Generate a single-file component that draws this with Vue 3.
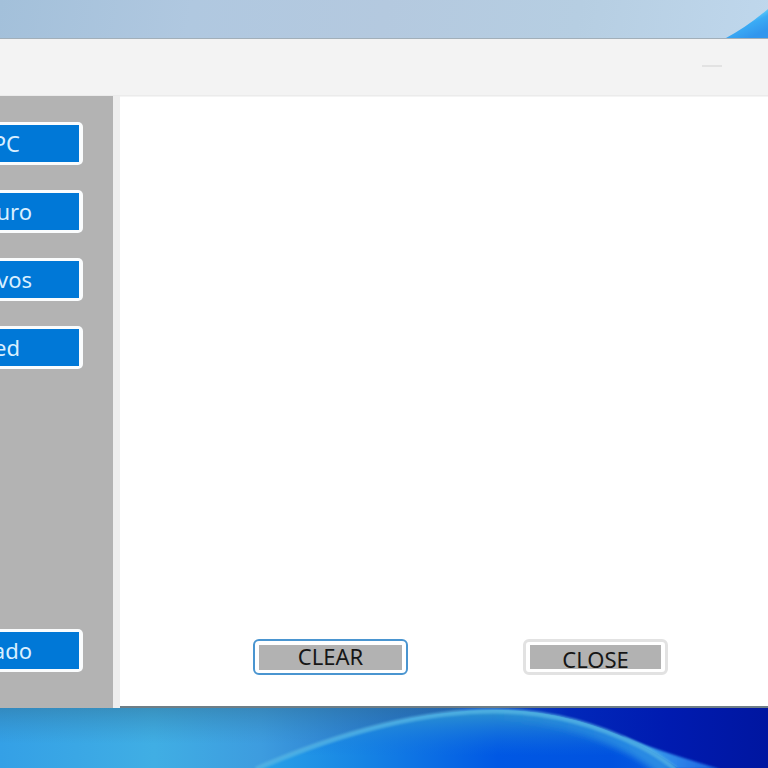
<script setup>
const actions = [
  { label: 'PC', size: 'short' },
  { label: 'uro', size: 'long' },
  { label: 'vos', size: 'long' },
  { label: 'ed', size: 'short' },
]
</script>

<template>
  <div class="desktop">
    <div class="sky" aria-hidden="true">
      <svg class="petal" viewBox="0 0 38 38">
        <defs>
          <linearGradient id="petal" x1="0.3" y1="0.3" x2="0.7" y2="0.9">
            <stop offset="0.1" stop-color="#6ad4fa" />
            <stop offset="0.45" stop-color="#3aabf5" />
            <stop offset="1" stop-color="#3196ed" />
          </linearGradient>
        </defs>
        <path d="M-4 38 Q17 27 38 9 V38 Z" fill="url(#petal)" />
      </svg>
    </div>

    <main class="window">
      <header class="titlebar">
        <button class="minimize" type="button" aria-label="Minimize"><span></span></button>
      </header>
      <div class="body">
        <nav class="sidebar">
          <button v-for="a in actions" :key="a.label" class="action" type="button">
            <span class="label" :class="a.size">{{ a.label }}</span>
          </button>
          <button class="action last" type="button"><span class="label long">ado</span></button>
        </nav>
        <section class="content">
          <div class="footer">
            <button class="command clear" type="button"><span>CLEAR</span></button>
            <button class="command close" type="button"><span>CLOSE</span></button>
          </div>
        </section>
      </div>
    </main>

    <svg class="bloom" viewBox="0 0 768 60" preserveAspectRatio="none" aria-hidden="true">
      <defs>
        <linearGradient id="base" x1="0" x2="1" y1="0" y2="0">
          <stop offset="0" stop-color="#34a0e6" />
          <stop offset="0.2" stop-color="#40aee4" />
          <stop offset="0.34" stop-color="#3d9cdf" />
          <stop offset="0.5" stop-color="#2676cc" />
          <stop offset="0.63" stop-color="#1556c4" />
          <stop offset="0.74" stop-color="#0128ba" />
          <stop offset="0.87" stop-color="#001bb0" />
          <stop offset="1" stop-color="#0016a0" />
        </linearGradient>
        <linearGradient id="shade" x1="0" x2="0" y1="0" y2="1">
          <stop offset="0" stop-color="#306e90" stop-opacity="0.45" />
          <stop offset="0.6" stop-color="#3080b0" stop-opacity="0" />
        </linearGradient>
        <linearGradient id="inner" x1="0" x2="1" y1="0" y2="0">
          <stop offset="0" stop-color="#2ba4e8" />
          <stop offset="0.25" stop-color="#1684e4" />
          <stop offset="0.55" stop-color="#0058e4" />
          <stop offset="0.8" stop-color="#0052df" />
          <stop offset="1" stop-color="#0a60e2" />
        </linearGradient>
        <linearGradient id="glow" x1="0" x2="0" y1="0" y2="1">
          <stop offset="0" stop-color="#359dcc" stop-opacity="0.95" />
          <stop offset="0.8" stop-color="#1672df" stop-opacity="0" />
        </linearGradient>
        <linearGradient id="rim" gradientUnits="userSpaceOnUse" x1="495" x2="640" y1="0" y2="0">
          <stop offset="0" stop-color="#36a0d8" stop-opacity="0" />
          <stop offset="1" stop-color="#2c90e4" stop-opacity="0.9" />
        </linearGradient>
        <linearGradient id="beam" x1="0" x2="1" y1="0" y2="0">
          <stop offset="0" stop-color="#4ab4ec" />
          <stop offset="0.5" stop-color="#2f8aea" />
          <stop offset="1" stop-color="#1a5fe0" />
        </linearGradient>
        <clipPath id="dome">
          <path d="M258 60 Q390 2 495 2 C550 2 598 16 640 37 Q660 47 678 60 Z" />
        </clipPath>
        <filter id="soft" x="-5%" y="-50%" width="110%" height="200%">
          <feGaussianBlur stdDeviation="1" />
        </filter>
        <filter id="haze" x="-5%" y="-50%" width="110%" height="200%">
          <feGaussianBlur stdDeviation="3" />
        </filter>
      </defs>
      <rect width="768" height="60" fill="url(#base)" />
      <rect width="460" height="60" fill="url(#shade)" />
      <path d="M622 28 Q655 42 720 61 L660 61 Z" fill="url(#beam)" filter="url(#soft)" />
      <g clip-path="url(#dome)">
        <rect x="250" width="450" height="60" fill="url(#inner)" />
        <rect x="250" width="450" height="60" fill="url(#glow)" />
        <path d="M495 5 C550 5 598 21 636 41 Q652 50 668 64" fill="none" stroke="url(#rim)" stroke-width="16" filter="url(#haze)" />
      </g>
      <path d="M256 61 Q390 3 495 3 C550 3 598 17 640 38 Q660 48 676 62" fill="none" stroke="#57b6e4" stroke-width="5" opacity="0.75" filter="url(#soft)" />
    </svg>
  </div>
</template>

<style>
body {
  margin: 0;
}
</style>

<style scoped>
.desktop {
  display: flex;
  flex-direction: column;
  min-height: 100vh;
  overflow: hidden;
  background: #b4c8de;
  font-family: "Noto Sans", "Open Sans", sans-serif;
}

button {
  box-sizing: border-box;
  margin: 0;
  padding: 0;
  border: 0;
  font: inherit;
  font-size: 22px;
  line-height: 28px;
}

.sky {
  display: flex;
  justify-content: flex-end;
  height: 38px;
  background: linear-gradient(100deg, #a3c0da 0%, #b0c8e0 25%, #b4c9df 50%, #b6cee2 75%, #bfd7ec 100%);
}

.petal {
  display: block;
  overflow: visible;
  width: 38px;
  height: 38px;
}

.window {
  display: flex;
  flex: 1;
  flex-direction: column;
  border-top: 1px solid #a2afb9;
  background: #f2f2f2;
}

.titlebar {
  display: flex;
  align-items: center;
  justify-content: flex-end;
  box-sizing: border-box;
  height: 57px;
  padding: 0 46px 2px 0;
  border-bottom: 1px solid #ebebeb;
  background: #f3f3f3;
}

.minimize {
  display: flex;
  align-items: center;
  height: 30px;
  background: transparent;
}

.minimize span {
  width: 20px;
  height: 2px;
  background: #e2e2e2;
}

.body {
  display: flex;
  flex: 1;
}

.sidebar {
  display: flex;
  flex-direction: column;
  gap: 25px;
  box-sizing: border-box;
  width: 120px;
  padding: 26px 30px 36px 0;
  border-right: 7px solid #eeeeee;
  background: #b3b3b3;
}

.action {
  display: flex;
  width: 83px;
  height: 43px;
  padding: 3px 4px 3px 0;
  border-radius: 0 5px 5px 0;
  background: #fafcfd;
  color: #d9efff;
}

.action::after {
  flex: 1;
  align-self: stretch;
  background: #0078d7;
  content: "";
}

.action.last {
  margin-top: auto;
}

.label {
  display: flex;
  align-items: center;
  align-self: stretch;
  justify-content: flex-end;
  padding-bottom: 2px;
  background: #0078d7;
}

.short {
  width: 20px;
}

.long {
  width: 32px;
}

.content {
  display: flex;
  flex: 1;
  flex-direction: column;
  justify-content: flex-end;
  border-top: 1px solid #f4f4f4;
  border-bottom: 2px solid #6f7e86;
  background: #ffffff;
}

.footer {
  display: flex;
  align-items: center;
  justify-content: space-between;
  padding: 0 100px 31px 133px;
}

.command {
  height: 36px;
  padding: 3px 4px;
  border-radius: 6px;
  background: #ffffff;
  color: #161616;
}

.command span {
  display: block;
  height: 25px;
  background: #b2b2b2;
  line-height: 22px;
}

.clear {
  width: 155px;
  border: 2px solid #4a95d0;
}

.close {
  width: 145px;
  border: 3px solid #e2e2e2;
}

.close span {
  height: 24px;
  line-height: 28px;
}

.bloom {
  display: block;
  width: 100%;
  height: 60px;
}
</style>
